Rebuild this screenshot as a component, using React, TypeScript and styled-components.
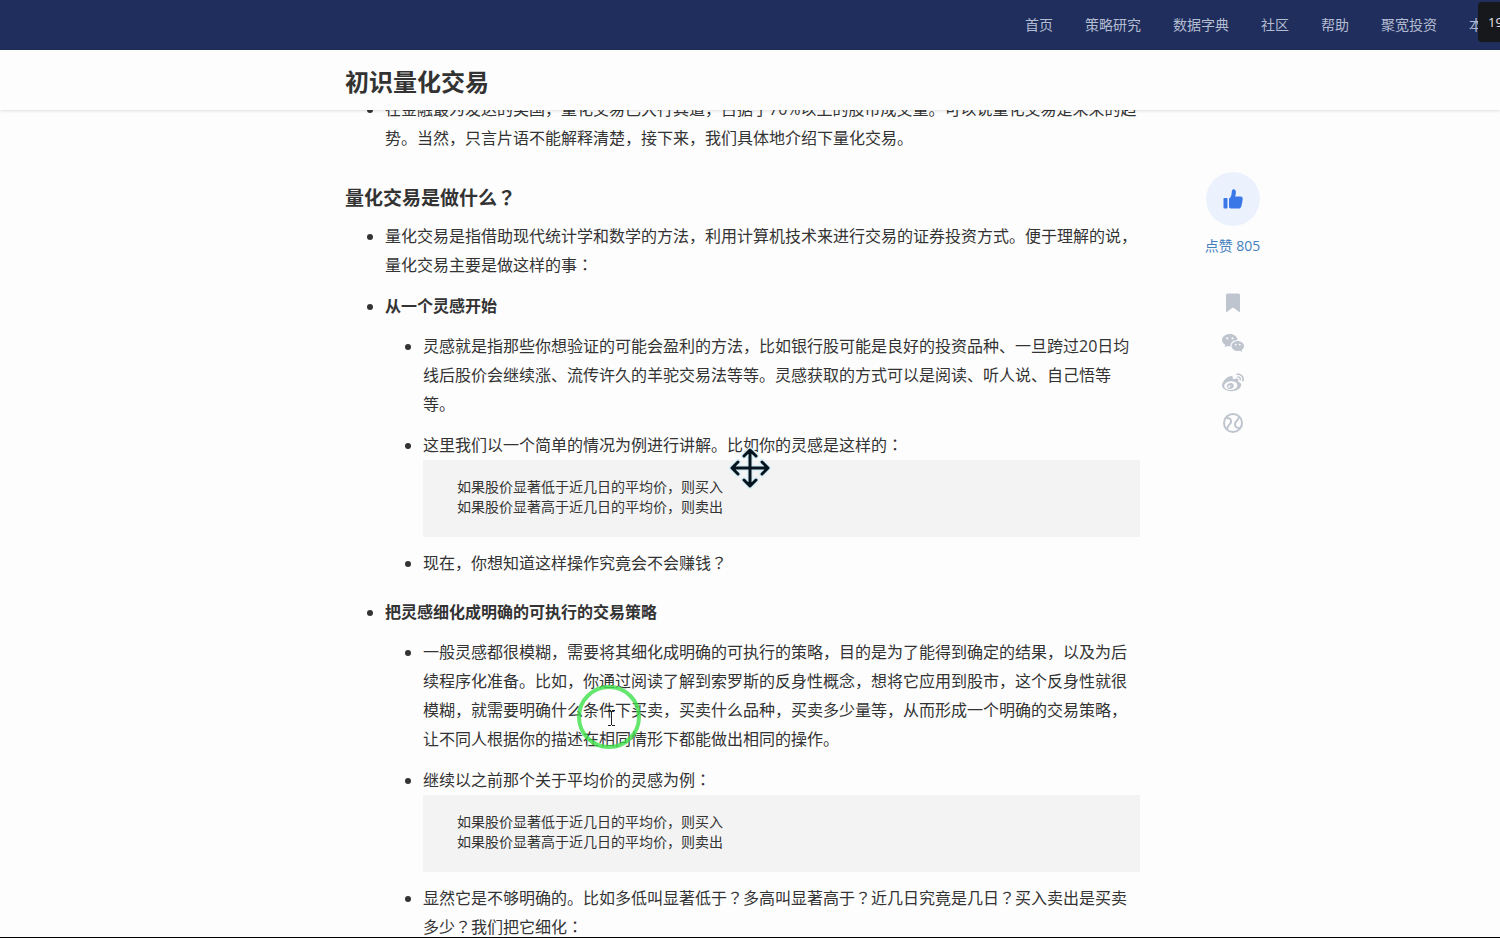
import React from 'react';
import styled, { createGlobalStyle } from 'styled-components';
import { FaWeibo } from 'react-icons/fa';

const GlobalStyle = createGlobalStyle`
  * { box-sizing: border-box; }
  body {
    margin: 0;
    background: #fdfdfd;
    color: #333;
    font-family: "Open Sans", "Noto Sans CJK SC", sans-serif;
    font-size: 16px;
    line-height: 29px;
  }
`;

const Page = styled.div`
  position: relative;
  display: flex;
  flex-direction: column;
  height: 100vh;
  overflow: hidden;
  border-bottom: 1px solid #000;
`;

const TopBar = styled.header`
  flex: none;
  background: #1f2e5c;
`;

const Nav = styled.nav`
  display: flex;
  justify-content: flex-end;
  align-items: center;
  gap: 32px;
  height: 50px;
  padding-right: 17px;
`;

const NavLink = styled.a`
  color: #b4bcd2;
  font-size: 14px;
  line-height: 20px;
  text-decoration: none;
  white-space: nowrap;
`;

const Counter = styled.div`
  position: absolute;
  top: 2px;
  right: -20px;
  width: 42px;
  height: 40px;
  padding-left: 10px;
  border-radius: 4px;
  background: #17181c;
  color: #e4e4e4;
  font-size: 13px;
  line-height: 40px;
`;

const TitleBar = styled.div`
  position: relative;
  z-index: 1;
  flex: none;
  background: #fdfdfd;
  box-shadow: 0 1px 3px rgba(0, 0, 0, 0.12);
`;

const Container = styled.div`
  display: flex;
  justify-content: space-between;
  align-items: flex-start;
  max-width: 1140px;
  margin: 0 auto;
  padding: 0 60px 0 165px;
`;

const Title = styled.h1`
  margin: 0;
  font-size: 24px;
  line-height: 60px;
  padding-top: 2px;
  height: 60px;
`;

const Main = styled.main`
  flex: 1;
  min-height: 0;
  overflow: hidden;
`;

const Article = styled.article`
  flex: 0 1 795px;
  min-width: 0;
  margin-top: -15px;
  text-spacing-trim: space-all;
`;

const SectionTitle = styled.h2`
  margin: 30px 0 9px;
  font-size: 19px;
  line-height: 30px;
`;

const List = styled.ul<{ $nested?: boolean }>`
  margin: ${(p) => (p.$nested ? '11px 0 20px' : '0')};
  padding-left: ${(p) => (p.$nested ? 38 : 40)}px;
  list-style: disc;
`;

const Item = styled.li`
  & + & { margin-top: 12px; }
`;

const Paragraph = styled.p<{ $strong?: boolean }>`
  margin: 0;
  font-weight: ${(p) => (p.$strong ? 700 : 400)};
`;

const CenteredMark = styled.span`
  font-family: "Noto Sans CJK JP", sans-serif;
  line-height: 1;
`;

const Code = styled.pre`
  margin: 0;
  padding: 16px 34px 21px;
  background: #f3f3f3;
  font-family: "Noto Sans CJK SC", monospace;
  font-size: 14px;
  line-height: 20px;
`;

const Side = styled.aside`
  flex: none;
  display: flex;
  flex-direction: column;
  align-items: center;
  width: 55px;
  margin-top: 62px;
`;

const LikeButton = styled.button`
  display: flex;
  flex-direction: column;
  align-items: center;
  gap: 10px;
  margin-bottom: 36px;
  padding: 0;
  border: 0;
  background: none;
  color: #4580bd;
  font: inherit;
  font-size: 14px;
  line-height: 20px;
  white-space: nowrap;
  cursor: pointer;
`;

const LikeCircle = styled.span`
  display: flex;
  align-items: center;
  justify-content: center;
  width: 54px;
  height: 54px;
  border-radius: 50%;
  background: #ecf2fd;
  color: #3a78e8;
`;

const Share = styled.div`
  display: flex;
  flex-direction: column;
  gap: 18px;
`;

const ShareButton = styled.button`
  display: flex;
  align-items: center;
  justify-content: center;
  width: 22px;
  height: 22px;
  padding: 0;
  border: 0;
  background: none;
  color: #bfc5cf;
  cursor: pointer;
`;

const MoveCursor = styled.svg`
  position: absolute;
  z-index: 2;
  left: calc(50% - 22px);
  top: calc(50% - 23px);
`;

const PointerRing = styled.svg`
  position: absolute;
  z-index: 2;
  left: calc(50% - 175px);
  top: calc(50% + 214px);
`;

const navItems = ['首页', '策略研究', '数据字典', '社区', '帮助', '聚宽投资', '本'];

const rules = '如果股价显著低于近几日的平均价，则买入\n如果股价显著高于近几日的平均价，则卖出';

// Question marks and colons sit in the middle of their full-width cell.
const centreMarks = (text: string) =>
  text.split(/([？：])/).map((part, i) =>
    i % 2 ? <CenteredMark key={i}>{part}</CenteredMark> : part,
  );

const Text = ({ children, strong }: { children: string; strong?: boolean }) => (
  <Paragraph $strong={strong}>{centreMarks(children)}</Paragraph>
);

const ThumbIcon = () => (
  <svg width="20" height="20" viewBox="0 0 20 20" fill="currentColor" aria-hidden="true">
    <rect x="0.500" y="9" width="4" height="10.500" rx="0.800" />
    <path d="M6 9.600C8 8.500 8.600 6 8.800 2.500C8.900 1 9.700 0.200 10.700 0.200C12.300 0.200 13 1.700 12.900 3.400C12.800 4.900 12.500 6.200 12.100 7.500H17.500C19 7.500 19.900 8.500 19.700 10C19.400 12.800 18.900 15.300 18.200 17.700C17.800 18.900 17 19.500 15.800 19.500H8C6.800 19.500 6 18.900 6 17.800Z" />
  </svg>
);

const BookmarkIcon = () => (
  <svg width="14" height="20" viewBox="0 0 14 20" fill="currentColor" aria-hidden="true">
    <path d="M1.500 0.500H12.500Q14 0.500 14 2V19.500L7 14.500L0 19.500V2Q0 0.500 1.500 0.500Z" />
  </svg>
);

const WechatIcon = () => (
  <svg width="22" height="20" viewBox="0 0 22 20" fill="currentColor" aria-hidden="true">
    <path d="M8 1C12 1 15.200 3.500 15.600 6.900C11 6.900 8.200 9.800 8.600 13.300Q6.900 13.500 5.300 12.900L2.700 14.200L3.300 11.900C1.300 10.600 0 9 0 7C0 3.600 3.600 1 8 1Z" />
    <path d="M15.700 7.900C19.200 7.900 22 10.200 22 13C22 14.700 21.100 16.100 19.700 17L20.200 19L17.900 17.800C13.500 18.900 9.500 16.400 9.500 13C9.500 10.200 12.200 7.900 15.700 7.900Z" />
    <g fill="#fdfdfd">
      <circle cx="5.300" cy="5.300" r="1.100" />
      <circle cx="10.500" cy="5.300" r="1.100" />
      <circle cx="13.700" cy="11.600" r="0.900" />
      <circle cx="17.800" cy="11.600" r="0.900" />
    </g>
  </svg>
);

const JoinQuantIcon = () => (
  <svg width="20" height="20" viewBox="0 0 20 20" fill="none" stroke="currentColor" strokeWidth="2" strokeLinecap="round" aria-hidden="true">
    <circle cx="10" cy="10" r="9" />
    <path d="M4 5C6.500 5 8.500 6.500 8 9C7.500 11.500 4.800 12 4.500 15" />
    <path d="M15.500 5C15.200 7.500 12.500 8 12 10.800C11.600 13.300 13.500 15 16 15" />
  </svg>
);

export default function App() {
  return (
    <Page>
      <GlobalStyle />
      <TopBar>
        <Nav>
          {navItems.map((item) => (
            <NavLink key={item} href="#">{item}</NavLink>
          ))}
        </Nav>
      </TopBar>
      <TitleBar>
        <Container>
          <Title>初识量化交易</Title>
        </Container>
      </TitleBar>
      <Main>
        <Container>
          <Article>
            <List>
              <Item>
                <Text>在金融最为发达的美国，量化交易已大行其道，占据了70%以上的股市成交量。可以说量化交易是未来的趋势。当然，只言片语不能解释清楚，接下来，我们具体地介绍下量化交易。</Text>
              </Item>
            </List>
            <SectionTitle>{centreMarks('量化交易是做什么？')}</SectionTitle>
            <List>
              <Item>
                <Text>量化交易是指借助现代统计学和数学的方法，利用计算机技术来进行交易的证券投资方式。便于理解的说，量化交易主要是做这样的事：</Text>
              </Item>
              <Item>
                <Text strong>从一个灵感开始</Text>
                <List $nested>
                  <Item>
                    <Text>灵感就是指那些你想验证的可能会盈利的方法，比如银行股可能是良好的投资品种、一旦跨过20日均线后股价会继续涨、流传许久的羊驼交易法等等。灵感获取的方式可以是阅读、听人说、自己悟等等。</Text>
                  </Item>
                  <Item>
                    <Text>这里我们以一个简单的情况为例进行讲解。比如你的灵感是这样的：</Text>
                    <Code>{rules}</Code>
                  </Item>
                  <Item>
                    <Text>现在，你想知道这样操作究竟会不会赚钱？</Text>
                  </Item>
                </List>
              </Item>
              <Item>
                <Text strong>把灵感细化成明确的可执行的交易策略</Text>
                <List $nested>
                  <Item>
                    <Text>一般灵感都很模糊，需要将其细化成明确的可执行的策略，目的是为了能得到确定的结果，以及为后续程序化准备。比如，你通过阅读了解到索罗斯的反身性概念，想将它应用到股市，这个反身性就很模糊，就需要明确什么条件下买卖，买卖什么品种，买卖多少量等，从而形成一个明确的交易策略，让不同人根据你的描述在相同情形下都能做出相同的操作。</Text>
                  </Item>
                  <Item>
                    <Text>继续以之前那个关于平均价的灵感为例：</Text>
                    <Code>{rules}</Code>
                  </Item>
                  <Item>
                    <Text>显然它是不够明确的。比如多低叫显著低于？多高叫显著高于？近几日究竟是几日？买入卖出是买卖多少？我们把它细化：</Text>
                  </Item>
                </List>
              </Item>
            </List>
          </Article>
          <Side>
            <LikeButton type="button">
              <LikeCircle><ThumbIcon /></LikeCircle>
              <span>点赞 805</span>
            </LikeButton>
            <Share>
              <ShareButton type="button" aria-label="收藏"><BookmarkIcon /></ShareButton>
              <ShareButton type="button" aria-label="微信"><WechatIcon /></ShareButton>
              <ShareButton type="button" aria-label="微博"><FaWeibo size={22} /></ShareButton>
              <ShareButton type="button" aria-label="聚宽"><JoinQuantIcon /></ShareButton>
            </Share>
          </Side>
        </Container>
      </Main>
      <Counter>19</Counter>
      <MoveCursor width="44" height="44" viewBox="0 0 44 44" fill="none" strokeLinecap="round" strokeLinejoin="round" aria-hidden="true">
        <path d="M22 4V40M4 22H40M16 10L22 4L28 10M16 34L22 40L28 34M10 16L4 22L10 28M34 16L40 22L34 28" stroke="#d9eef5" strokeWidth="6" />
        <path d="M22 4V40M4 22H40M16 10L22 4L28 10M16 34L22 40L28 34M10 16L4 22L10 28M34 16L40 22L34 28" stroke="#06141f" strokeWidth="3" />
      </MoveCursor>
      <PointerRing width="68" height="68" viewBox="0 0 68 68" fill="none" aria-hidden="true">
        <circle cx="34" cy="34" r="30" stroke="#3fe04a" strokeOpacity="0.8" strokeWidth="4" />
        <path d="M33 27.500H36M37 27.500H40M36.500 28V42M33 42.500H36M37 42.500H40" stroke="#222" />
      </PointerRing>
    </Page>
  );
}
